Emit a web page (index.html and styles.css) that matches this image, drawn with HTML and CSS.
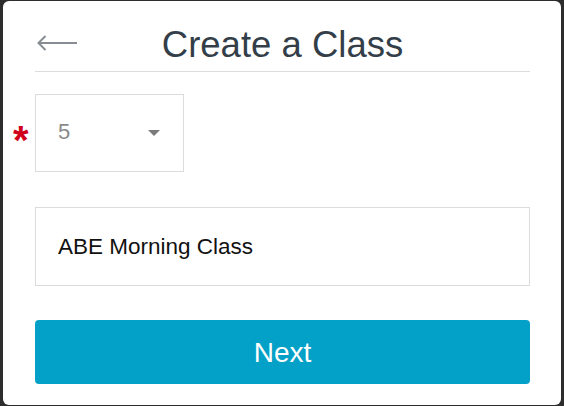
FILE: index.html
```html
<!DOCTYPE html>
<html lang="en">
<head>
<meta charset="utf-8">
<title>Create a Class</title>
<link rel="stylesheet" href="styles.css">
</head>
<body>
<div class="modal">
  <header class="modal-header">
    <button class="back" type="button" aria-label="Back">
      <svg width="41" height="16" viewBox="0 0 41 16" fill="none" stroke="#878d92" stroke-width="2" stroke-linecap="butt" stroke-linejoin="miter">
        <path d="M41 8H2.5"/>
        <path d="M9.5 1L2.5 8L9.5 15"/>
      </svg>
    </button>
    <h1 class="title">Create a Class</h1>
    <span class="spacer"></span>
  </header>
  <form class="form">
    <div class="field-row">
      <span class="required">*</span>
      <div class="select">
        <span class="select-value">5</span>
        <span class="caret"></span>
      </div>
    </div>
    <input class="text-input" type="text" value="ABE Morning Class">
    <button class="next" type="button">Next</button>
  </form>
</div>
</body>
</html>
```
FILE: styles.css
```css
html, body {
  margin: 0;
}
body {
  background: #2d2d2d;
  font-family: "Liberation Sans", Arial, Helvetica, sans-serif;
  padding: 1px 3px;
  box-sizing: border-box;
  height: 406px;
  overflow: hidden;
}
.modal {
  background: #fff;
  border-radius: 6px;
  height: 404px;
  padding: 0 31px 0 32px;
  box-sizing: border-box;
}
.modal-header {
  display: grid;
  grid-template-columns: 1fr auto 1fr;
  align-items: center;
  padding: 22px 0 5px;
  border-bottom: 1px solid #dddddd;
}
.back {
  justify-self: start;
  display: flex;
  background: none;
  border: 0;
  padding: 0;
  margin: 0 0 3px 1px;
  cursor: pointer;
}
.title {
  margin: 0;
  font-size: 36.5px;
  line-height: 43px;
  font-weight: normal;
  color: #333e49;
}
.form {
  display: flex;
  flex-direction: column;
  padding-top: 22px;
  margin: 0;
}
.field-row {
  display: flex;
  align-items: flex-start;
  margin-left: -22px;
}
.required {
  width: 22px;
  font-size: 40px;
  line-height: 40px;
  font-weight: bold;
  color: #d0021b;
  margin-top: 26px;
}
.select {
  width: 149px;
  height: 78px;
  box-sizing: border-box;
  border: 1px solid #dcdcdc;
  display: flex;
  align-items: center;
  justify-content: space-between;
  padding: 0 23px 3px 22px;
}
.select-value {
  font-size: 22px;
  color: #8a8a8a;
}
.caret {
  width: 0;
  height: 0;
  border-left: 6px solid transparent;
  border-right: 6px solid transparent;
  border-top: 6px solid #7b7b7b;
  margin-top: 2px;
}
.text-input {
  margin: 35px 0 0;
  height: 79px;
  box-sizing: border-box;
  border: 1px solid #dcdcdc;
  border-radius: 0;
  padding: 0 0 0 22px;
  font-family: inherit;
  font-size: 22.5px;
  color: #111;
  background: #fff;
  outline: none;
}
.next {
  margin-top: 34px;
  height: 64px;
  border: 0;
  border-radius: 4px;
  background: #03a1c7;
  color: #fff;
  font-family: inherit;
  font-size: 28px;
  padding: 2px 0 0;
  cursor: pointer;
}
```
